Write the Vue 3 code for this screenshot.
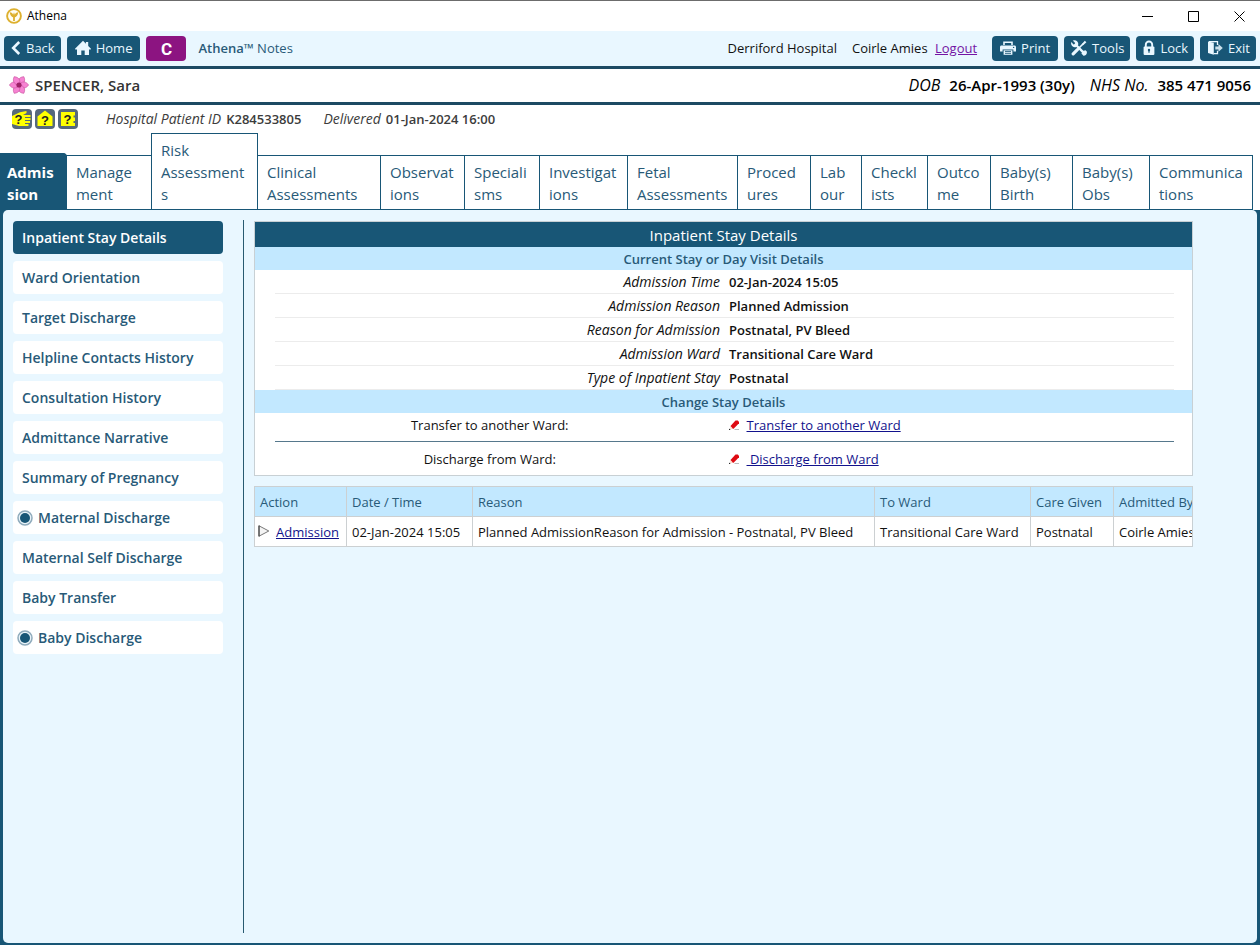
<script setup>
import { ref } from 'vue'

const tabs = [
  { label: 'Admis\nsion', width: 67 },
  { label: 'Manage\nment', width: 85 },
  { label: 'Risk\nAssessment\ns', width: 106 },
  { label: 'Clinical\nAssessments', width: 123 },
  { label: 'Observat\nions', width: 84 },
  { label: 'Speciali\nsms', width: 75 },
  { label: 'Investigat\nions', width: 88 },
  { label: 'Fetal\nAssessments', width: 110 },
  { label: 'Proced\nures', width: 73 },
  { label: 'Lab\nour', width: 51 },
  { label: 'Checkl\nists', width: 66 },
  { label: 'Outco\nme', width: 63 },
  { label: 'Baby(s)\nBirth', width: 82 },
  { label: 'Baby(s)\nObs', width: 77 },
  { label: 'Communica\ntions', width: 103 },
]
const tabTotal = tabs.reduce((sum, tab) => sum + tab.width, 0)
const activeTab = ref(0)

const menu = [
  { label: 'Inpatient Stay Details' },
  { label: 'Ward Orientation' },
  { label: 'Target Discharge' },
  { label: 'Helpline Contacts History' },
  { label: 'Consultation History' },
  { label: 'Admittance Narrative' },
  { label: 'Summary of Pregnancy' },
  { label: 'Maternal Discharge', dot: true },
  { label: 'Maternal Self Discharge' },
  { label: 'Baby Transfer' },
  { label: 'Baby Discharge', dot: true },
]
const activeItem = ref(0)

const details = [
  ['Admission Time', '02-Jan-2024 15:05'],
  ['Admission Reason', 'Planned Admission'],
  ['Reason for Admission', 'Postnatal, PV Bleed'],
  ['Admission Ward', 'Transitional Care Ward'],
  ['Type of Inpatient Stay', 'Postnatal'],
]

const changes = [
  { label: 'Transfer to another Ward:', link: 'Transfer to another Ward' },
  { label: 'Discharge from Ward:', link: '\u00a0Discharge from Ward' },
]
</script>

<template>
  <div class="window">
    <header class="titlebar">
      <svg class="logo" viewBox="0 0 16 16" aria-hidden="true">
        <circle cx="8" cy="8" r="6.9" fill="#fffdf2" stroke="#ddb02e" stroke-width="1.9" />
        <path d="M3.800 4.200c.2 3 1.500 4.800 4.200 5.300 2.700-.5 4-2.300 4.200-5.300-1.800 0-3 1-3.300 2.600L8 4.200l-.9 2.600C6.800 5.200 5.600 4.200 3.800 4.200z" fill="#ddb02e" />
        <path d="M8 8v5" stroke="#ddb02e" stroke-width="1.800" />
      </svg>
      <span class="app-name">Athena</span>
      <div class="controls">
        <button type="button" aria-label="Minimise"><svg viewBox="0 0 11 11"><path d="M0 5.500h11" /></svg></button>
        <button type="button" aria-label="Maximise"><svg viewBox="0 0 11 11"><path d="M.5.5h10v10H.5z" /></svg></button>
        <button type="button" aria-label="Close"><svg viewBox="0 0 11 11"><path d="M.5.5l10 10M10.500.5l-10 10" /></svg></button>
      </div>
    </header>

    <nav class="toolbar">
      <button type="button" class="btn">
        <svg class="ic-back" viewBox="0 0 10 16"><path d="M8.200 2L2.200 8l6 6" fill="none" stroke="currentColor" stroke-width="2.600" /></svg>
        Back
      </button>
      <button type="button" class="btn roomy">
        <svg class="ic" viewBox="0 0 16 16"><path d="M8 .8l2.900 2.900V2h2.300v4L16 8.800l-1 1.100-1-.8V15H9.700v-4.500H6.300V15H2V9.100l-1 .8-1-1.100z" fill="currentColor" /></svg>
        Home
      </button>
      <button type="button" class="btn btn-c">C</button>
      <span class="product"><b>Athena™</b> Notes</span>
      <span class="spacer"></span>
      <span class="site">Derriford Hospital</span>
      <span class="user">Coirle Amies <a href="#" class="logout">Logout</a></span>
      <button type="button" class="btn roomy">
        <svg class="ic" viewBox="0 0 16 16">
          <path d="M3.200 5V1.600h9.600V5h-1.600V3H4.800v2z" fill="currentColor" />
          <path d="M1.500 5.400h13c.9 0 1.500.6 1.500 1.500v4.600h-2.600V9.400H2.600v2.100H0V6.900c0-.9.6-1.500 1.500-1.500z" fill="currentColor" />
          <path d="M3.600 10.300h8.800v4.500H3.600z" fill="currentColor" />
          <path d="M5 11.400h6M5 13.300h6" stroke="#185676" stroke-width=".9" />
          <circle cx="13.600" cy="7.400" r=".7" fill="#185676" />
        </svg>
        Print
      </button>
      <button type="button" class="btn">
        <svg class="ic" viewBox="0 0 16 16">
          <path d="M4.500 4.500l8.800 8.800" stroke="currentColor" stroke-width="2.400" stroke-linecap="round" />
          <path d="M1.700.6l2.500 2.300-.4 1.300-1.300.4L.4 2a4 4 0 0 0 1 4.300 3.800 3.800 0 0 0 3.800.7L7 5.200A3.800 3.800 0 0 0 6.300 1.400 4 4 0 0 0 1.700.6z" fill="currentColor" />
          <path d="M15.600 14l-2.500-2.300.1-1.100 1.300-.3 1.300 1.300c.5 1.900-.9 4.300-3.300 4.200l-2.100-2.400 2-3" fill="currentColor" />
          <path d="M2.200 13.900l4.200-4.200" stroke="currentColor" stroke-width="3.200" stroke-linecap="round" />
          <path d="M6.500 9.500l5.600-5.600" stroke="currentColor" stroke-width="1.500" />
          <path d="M10.900 3.900L13.800.7l1.600 1.600-3.200 2.900z" fill="currentColor" />
        </svg>
        Tools
      </button>
      <button type="button" class="btn">
        <svg class="ic-lock" viewBox="0 0 12 16">
          <path d="M2.800 7V4.700a3.200 3.200 0 0 1 6.400 0V7" fill="none" stroke="currentColor" stroke-width="1.900" />
          <rect x=".6" y="6.600" width="10.800" height="8.400" rx="1" fill="currentColor" />
          <circle cx="6" cy="10" r="1.200" fill="#185676" />
          <path d="M6 10v2.800" stroke="#185676" stroke-width="1.200" />
        </svg>
        Lock
      </button>
      <button type="button" class="btn">
        <svg class="ic" viewBox="0 0 16 16">
          <path d="M1 1.600l5.800 1.200v12L1 13z" fill="currentColor" />
          <path d="M2 1.700h8.500v3.400M10.500 10.700v3H6.800" fill="none" stroke="currentColor" stroke-width="1.300" />
          <path d="M8.300 6.500h3.200V4l4.300 3.900-4.300 3.900V9.400H8.300z" fill="currentColor" opacity=".85" />
        </svg>
        Exit
      </button>
    </nav>

    <section class="patient">
      <svg class="flower" viewBox="0 0 20 20" aria-hidden="true">
        <g fill="#f683d2" stroke="#c9509f" stroke-width=".6">
          <path v-for="n in 6" :key="n" :transform="`rotate(${n * 60 - 30} 10 10)`" d="M10 10.500C5.800 6.800 6.200 3 10 .4c3.800 2.600 4.200 6.400 0 10.100z" />
        </g>
        <circle cx="10" cy="10" r="2.600" fill="#9c2168" />
      </svg>
      <span class="name">SPENCER, Sara</span>
      <span class="spacer"></span>
      <span class="fact"><i>DOB</i> <b>26-Apr-1993 (30y)</b></span>
      <span class="fact"><i>NHS No.</i> <b>385 471 9056</b></span>
    </section>

    <section class="ids">
      <span class="flags">
        <svg viewBox="0 0 20 20" aria-hidden="true">
          <rect width="20" height="20" rx="4" fill="#56697c" />
          <path d="M0 7L8 3.300 14.500 2v2L11 6h7.500v2H13v1h5.500v2H13v1h5v2h-5v1h3.500v2H7L0 15z" fill="#ff0" />
          <text x="6.500" y="14.500" text-anchor="middle">?</text>
        </svg>
        <svg viewBox="0 0 20 20" aria-hidden="true">
          <rect width="20" height="20" rx="4" fill="#56697c" />
          <path d="M10 1.500l7.500 6V17h-15V7.500z" fill="#ff0" />
          <text x="10" y="15.500" text-anchor="middle">?</text>
        </svg>
        <svg viewBox="0 0 20 20" aria-hidden="true">
          <rect width="20" height="20" rx="4" fill="#56697c" />
          <path d="M3 3h14v3.500h-1.500v2H17v3.500h-1.500v2H17v3H3z" fill="#ff0" />
          <text x="9.500" y="14.500" text-anchor="middle">?</text>
        </svg>
      </span>
      <span class="id-fact"><i>Hospital Patient ID</i> <b>K284533805</b></span>
      <span class="id-fact"><i>Delivered</i> <b>01-Jan-2024 16:00</b></span>
    </section>

    <nav class="tabs">
      <button
        v-for="(tab, i) in tabs"
        :key="i"
        type="button"
        class="tab"
        :class="{ active: i === activeTab }"
        :style="{ width: (tab.width / tabTotal) * 100 + '%' }"
        @click="activeTab = i"
      >{{ tab.label }}</button>
    </nav>

    <div class="frame">
      <main class="body">
        <aside class="menu">
          <button
            v-for="(item, i) in menu"
            :key="item.label"
            type="button"
            class="menu-item"
            :class="{ active: i === activeItem, dotted: item.dot }"
            @click="activeItem = i"
          >
            <svg v-if="item.dot" class="dot" viewBox="0 0 16 16" aria-hidden="true">
              <circle cx="8" cy="8" r="7" fill="#e9f3f8" stroke="#8fabbc" stroke-width="1.500" />
              <circle cx="8" cy="8" r="5" fill="#185676" />
            </svg>
            {{ item.label }}
          </button>
        </aside>

        <div class="content">
          <section class="panel">
            <h1>Inpatient Stay Details</h1>
            <h2>Current Stay or Day Visit Details</h2>
            <dl>
              <div v-for="[label, value] in details" :key="label" class="detail">
                <dt>{{ label }}</dt>
                <dd>{{ value }}</dd>
              </div>
            </dl>
            <h2>Change Stay Details</h2>
            <div class="changes">
              <div v-for="row in changes" :key="row.label" class="change">
                <span class="change-label">{{ row.label }}</span>
                <span class="change-link">
                  <svg class="pencil" viewBox="0 0 10 10" aria-hidden="true">
                    <path d="M1.500 6L6.500.5h2.300L10 1.800v1.400L4.600 8.800H3z" fill="#de0a12" />
                    <path d="M1.500 6L4 8.800 1 9.500z" fill="#ffd9c9" />
                    <path d="M0 10V8.500L1.600 10z" fill="#111" />
                    <path d="M5.500 9.500H10" stroke="#bbb" />
                  </svg>
                  <a href="#">{{ row.link }}</a>
                </span>
              </div>
            </div>
          </section>

          <div class="table-clip">
            <table>
              <thead>
                <tr>
                  <th class="c-action">Action</th>
                  <th class="c-date">Date / Time</th>
                  <th class="c-reason">Reason</th>
                  <th class="c-ward">To Ward</th>
                  <th class="c-care">Care Given</th>
                  <th class="c-by">Admitted By</th>
                </tr>
              </thead>
              <tbody>
                <tr>
                  <td class="action">
                    <svg class="expand" viewBox="0 0 12 12" aria-hidden="true">
                      <path d="M1 .8v10.400L10.800 6z" fill="#f4f4f4" stroke="#777" stroke-width="1" />
                      <path d="M1 .5v11" stroke="#333" />
                    </svg>
                    <a href="#">Admission</a>
                  </td>
                  <td>02-Jan-2024 15:05</td>
                  <td>Planned AdmissionReason for Admission - Postnatal, PV Bleed</td>
                  <td>Transitional Care Ward</td>
                  <td>Postnatal</td>
                  <td>Coirle Amies</td>
                </tr>
              </tbody>
            </table>
          </div>
        </div>
      </main>
    </div>
  </div>
</template>

<style>
body {
  background: #fff;
}
</style>

<style scoped>
* {
  box-sizing: border-box;
}

.window {
  min-height: 100vh;
  display: flex;
  flex-direction: column;
  border-top: 1px solid #6c6c6c;
  background: #fff;
  color: #111;
  font: 13px/20px "Open Sans", "Noto Sans", sans-serif;
}

button {
  font: inherit;
  margin: 0;
  border: 0;
  cursor: pointer;
}

b {
  font-weight: 600;
}

.spacer {
  flex: 1;
}

/* title bar */
.titlebar {
  display: flex;
  align-items: center;
  height: 30px;
  padding-left: 6px;
  font-size: 12px;
  color: #000;
}

.logo {
  width: 16px;
  height: 16px;
  margin-right: 5px;
}

.controls {
  display: flex;
  margin-left: auto;
}

.controls button {
  display: grid;
  place-items: center;
  width: 46px;
  height: 28px;
  padding: 0 0 0 4px;
  background: none;
}

.controls svg {
  width: 11px;
  height: 11px;
  fill: none;
  stroke: #000;
}

/* toolbar */
.toolbar {
  display: flex;
  align-items: center;
  gap: 6px;
  height: 38px;
  padding: 0 4px;
  background: #e9f7ff;
  border-bottom: 3px solid #1c4a63;
  white-space: nowrap;
}

.btn {
  display: flex;
  align-items: center;
  gap: 5px;
  height: 25px;
  padding: 0 6px 2px 7px;
  border-radius: 4px;
  background: #185676;
  color: #e9f7ff;
}

.btn.roomy {
  padding: 0 8px 2px;
}

.btn.btn-c {
  justify-content: center;
  width: 40px;
  padding: 0;
  background: #8c1481;
  color: #fff;
  font: bold 17px Roboto, "Liberation Sans", sans-serif;
}

.ic {
  width: 16px;
  height: 16px;
}

.ic-back {
  width: 10px;
  height: 16px;
}

.ic-lock {
  width: 12px;
  height: 16px;
}

.product,
.site,
.user {
  padding-bottom: 2px;
}

.product {
  margin-left: 6px;
  color: #285a78;
}

.site,
.user {
  margin-right: 9px;
}

a {
  color: #12128c;
}

.logout {
  margin-left: 4px;
  color: #7414a4;
}

/* patient banner */
.patient {
  display: flex;
  align-items: center;
  gap: 15px;
  height: 36px;
  padding: 0 9px 1px;
  border-bottom: 3px solid #1c4a63;
  font-size: 15px;
  color: #000;
  white-space: nowrap;
}

.flower {
  width: 20px;
  height: 20px;
  margin-right: -9px;
}

.name {
  color: #333;
  font-weight: 600;
}

.fact {
  display: flex;
  gap: 9px;
}

.fact i {
  font-size: 16px;
}

.ids {
  display: flex;
  align-items: center;
  gap: 22px;
  height: 28px;
  padding-left: 12px;
  color: #3c3c3c;
}

.flags {
  display: flex;
  gap: 3px;
  margin-right: 6px;
}

.flags svg {
  width: 20px;
  height: 20px;
}

.flags text {
  font: bold 13px "Liberation Sans", sans-serif;
  fill: #222;
}

.id-fact {
  display: flex;
  gap: 5px;
}

.id-fact i {
  font-size: 14px;
}

/* tabs */
.tabs {
  display: flex;
  align-items: flex-end;
  padding-right: 7px;
}

.tab {
  min-width: 0;
  padding: 5px 0 4px 9px;
  border: solid #185676;
  border-width: 1px 1px 1px 0;
  background: #fff;
  box-shadow: -1px 0 0 #185676;
  color: #285a78;
  font-size: 15px;
  line-height: 22px;
  text-align: left;
  white-space: pre;
}

.tab.active {
  padding: 7px 0 4px 7px;
  border-radius: 0 4px 0 0;
  background: #185676;
  color: #fff;
  font-weight: 700;
}

/* working area */
.frame {
  flex: 1;
  display: flex;
  padding: 0 3px 2px;
  background: #185676;
}

.body {
  flex: 1;
  min-width: 0;
  display: flex;
  padding: 10px 64px 10px 10px;
  border-radius: 5px;
  background: #e9f7ff;
}

.menu {
  display: flex;
  flex-direction: column;
  gap: 7px;
  width: 231px;
  padding: 1px 20px 0 0;
  border-right: 1px solid #285a70;
}

.menu-item {
  display: flex;
  align-items: center;
  gap: 5px;
  height: 33px;
  padding: 0 9px;
  border-radius: 4px;
  background: #fff;
  color: #285a78;
  font-size: 14px;
  font-weight: 600;
  text-align: left;
  white-space: nowrap;
}

.menu-item.dotted {
  padding-left: 4px;
}

.menu-item.active {
  background: #185676;
  color: #fff;
}

.dot {
  width: 16px;
  height: 16px;
}

.content {
  flex: 1;
  min-width: 0;
  padding: 1px 0 0 10px;
}

.panel {
  border: 1px solid #c8d0d4;
  background: #fff;
}

h1,
h2 {
  margin: 0;
  text-align: center;
}

h1 {
  padding-top: 1px;
  background: #185676;
  color: #fff;
  font-size: 15px;
  font-weight: 400;
  line-height: 24px;
}

h2 {
  padding-top: 1px;
  background: #c2e8ff;
  color: #285a78;
  font-size: 13px;
  font-weight: 600;
  line-height: 22px;
}

dl {
  margin: 0 18px 0 20px;
}

.detail {
  display: grid;
  grid-template-columns: 1fr 1fr;
  gap: 9px;
  padding-top: 1px;
  border-bottom: 1px solid #ececec;
  line-height: 22px;
}

dt {
  font-size: 14px;
  font-style: italic;
  text-align: right;
}

dd {
  margin: 0;
  font-weight: 600;
}

.changes {
  margin: 0 18px 0 20px;
}

.change {
  display: grid;
  grid-template-columns: 1fr 1fr;
  padding: 2px 0 6px;
}

.change + .change {
  padding: 7px 0 6px;
  border-top: 1px solid #56788c;
}

.change-label {
  padding-right: 20px;
  text-align: center;
}

.change-link {
  display: flex;
  align-items: center;
  gap: 8px;
  padding-left: 4px;
}

.pencil {
  width: 10px;
  height: 10px;
}

/* stay history */
.table-clip {
  margin-top: 10px;
  overflow: hidden;
  border-right: 1px solid #c8d0d4;
}

table {
  width: 960px;
  table-layout: fixed;
  border-collapse: collapse;
  background: #fff;
  white-space: nowrap;
}

th,
td {
  height: 30px;
  padding: 0 5px;
  border: 1px solid #ccd0d2;
  text-align: left;
}

th {
  background: #c2e8ff;
  color: #285a78;
  font-weight: 400;
}

.c-action {
  width: 92px;
}

.c-date {
  width: 126px;
}

.c-reason {
  width: 402px;
}

.c-ward {
  width: 156px;
}

.c-care {
  width: 83px;
}

td.action {
  padding-left: 3px;
}

.expand {
  width: 12px;
  height: 12px;
  margin-right: 6px;
}
</style>
